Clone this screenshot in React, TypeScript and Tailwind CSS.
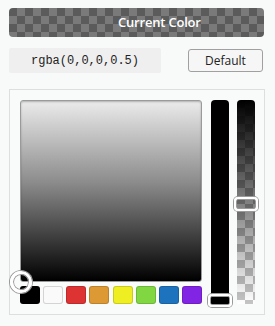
import React from 'react';

const swatches = ['#000000', '#fafafa', '#dd3333', '#dd9933', '#eeee22', '#81d742', '#1e73be', '#8224e3'];

const App: React.FC = () => {
  return (
    <div className="w-[275px] h-[326px] overflow-hidden bg-[#f8f9f9] pt-2 pl-[9px] font-['Open_Sans',sans-serif]">
      {/* current color bar */}
      <div className="w-[255px] h-[29px] rounded-[4px] flex items-center pl-[109px] text-white text-[13px] font-semibold tracking-[-0.2px] bg-[conic-gradient(#7a7a7a_25%,#5b5b5b_0_50%,#7a7a7a_0_75%,#5b5b5b_0)] bg-[length:16px_16px]">
        Current Color
      </div>

      <div className="mt-[11px] w-[254px] h-[25px] flex items-center justify-between">
        <div className="w-[152px] h-[25px] bg-[#efefef] rounded-[2px] flex items-center justify-center font-['Liberation_Mono',monospace] text-[12px] text-[#222]">
          rgba(0,0,0,0.5)
        </div>
        <button className="w-[75px] h-[23px] border border-[#a0a0a0] rounded-[3px] bg-[#f6f6f6] text-[12px] text-[#222] leading-none">
          Default
        </button>
      </div>

      {/* picker */}
      <div className="mt-4 w-[256px] h-[226px] border border-[#dedede] bg-[#f9fafa] pt-[10px] pl-[10px] flex">
        <div className="w-[182px]">
          <div className="relative w-[182px] h-[182px] rounded-[3px] border border-[#9a9a9a] bg-[linear-gradient(to_bottom,#ebebeb,#8c8c8c_45%,#000)] shadow-[inset_0_1px_2px_rgba(0,0,0,0.25)]">
            <div className="absolute left-[-11px] bottom-[-12px] w-[22px] h-[22px] rounded-full border-[3px] border-white shadow-[0_0_0_1px_#9a9a9a,inset_0_0_0_1px_#9a9a9a]" />
          </div>
          <div className="mt-1 flex justify-between">
            {swatches.map((c) => (
              <div
                key={c}
                className="w-5 h-[18px] rounded-[3px] border border-black/15"
                style={{ backgroundColor: c }}
              />
            ))}
          </div>
        </div>

        {/* hue / lightness */}
        <div className="relative ml-[9px] w-[18px] h-[204px] rounded-t-[4px] bg-black">
          <div className="absolute left-[-3px] bottom-[-3px] w-[24px] h-[13px] rounded-[4px] border-2 border-white shadow-[0_0_0_1px_#9a9a9a,inset_0_0_0_1px_#9a9a9a]" />
        </div>

        {/* alpha */}
        <div className="relative ml-2 w-[18px] h-[204px] rounded-t-[4px] rounded-b-[2px] bg-[conic-gradient(#ffffff_25%,#c4c4c4_0_50%,#ffffff_0_75%,#c4c4c4_0)] bg-[length:16px_16px]">
          <div className="absolute inset-0 rounded-t-[4px] rounded-b-[2px] bg-[linear-gradient(to_bottom,#000,rgba(0,0,0,0))]" />
          <div className="absolute left-[-3px] top-[97px] w-[24px] h-[14px] rounded-[4px] border-2 border-white shadow-[0_0_0_1px_#9a9a9a,inset_0_0_0_1px_#9a9a9a]" />
        </div>
      </div>
    </div>
  );
};

export default App;
